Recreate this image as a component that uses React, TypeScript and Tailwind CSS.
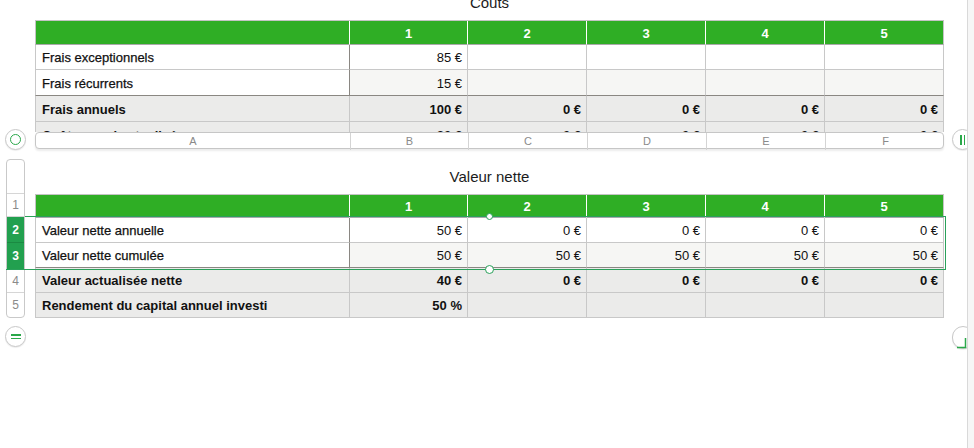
import React from 'react';

const COLS = 'grid grid-cols-[315px_118px_119px_119px_119px_119px]';

type Row = {
  label: string;
  values: string[];
  total?: boolean;
  alt?: boolean;
  lastPlain?: boolean;
  h: string;
};

const coutsRows: Row[] = [
  { label: 'Frais exceptionnels', values: ['85 €', '', '', '', ''], h: 'h-[25px]' },
  { label: 'Frais récurrents', values: ['15 €', '', '', '', ''], alt: true, lastPlain: true, h: 'h-[26px]' },
  { label: 'Frais annuels', values: ['100 €', '0 €', '0 €', '0 €', '0 €'], total: true, h: 'h-[26px]' },
  { label: 'Coût annuel actualisé', values: ['80 €', '0 €', '0 €', '0 €', '0 €'], total: true, h: 'h-[26px]' },
];

const valeurRows: Row[] = [
  { label: 'Valeur nette annuelle', values: ['50 €', '0 €', '0 €', '0 €', '0 €'], h: 'h-[25px]' },
  { label: 'Valeur nette cumulée', values: ['50 €', '50 €', '50 €', '50 €', '50 €'], alt: true, lastPlain: true, h: 'h-[25px]' },
  { label: 'Valeur actualisée nette', values: ['40 €', '0 €', '0 €', '0 €', '0 €'], total: true, h: 'h-[25px]' },
  { label: 'Rendement du capital annuel investi', values: ['50 %', '', '', '', ''], total: true, h: 'h-[25px]' },
];

function HeaderRow({ h }: { h: string }) {
  return (
    <div className={`${COLS} ${h} bg-[#2fae25] border-t border-[#c4c4c4]`}>
      <div className="border-l border-r border-white border-l-[#c4c4c4] border-b border-b-[#a9a9a9]" />
      {[1, 2, 3, 4, 5].map((n) => (
        <div
          key={n}
          className={`flex items-center justify-center pt-[2px] text-[13px] font-bold text-white border-b border-b-[#a9a9a9] ${n < 5 ? 'border-r border-white' : 'border-r border-[#c4c4c4]'}`}
        >
          {n}
        </div>
      ))}
    </div>
  );
}

function BodyRow({ row }: { row: Row }) {
  const bg = row.total ? 'bg-[#ebebea]' : row.alt ? 'bg-[#f6f6f4]' : 'bg-white';
  const bottom = row.lastPlain ? 'border-b-[#8a8782]' : 'border-b-[#c8c8c8]';
  const divider = row.total ? 'border-r-[#c8c8c8]' : 'border-r-[#8a8782]';
  return (
    <div className={`${COLS} ${row.h} ${bg} text-[13px] text-[#111]`}>
      <div
        className={`flex items-center pl-[6px] pt-[2px] border-l border-l-[#c8c8c8] border-r border-b ${divider} ${bottom} ${row.total ? 'font-bold' : '[-webkit-text-stroke:0.25px_#111]'} ${!row.total ? 'bg-white' : ''}`}
      >
        {row.label}
      </div>
      {row.values.map((v, i) => (
        <div
          key={i}
          className={`flex items-center justify-end pr-[5px] pt-[2px] border-r border-b border-r-[#c8c8c8] ${bottom} ${row.total ? 'font-bold' : ''}`}
        >
          {v}
        </div>
      ))}
    </div>
  );
}

function Circle({ children }: { children: React.ReactNode }) {
  return (
    <div className="relative w-[21px] h-[21px] shrink-0 rounded-full border border-[#c9c9c9] bg-white shadow-[0_1px_1px_rgba(0,0,0,0.08)] flex items-center justify-center">
      {children}
    </div>
  );
}

export default function App() {
  return (
    <div className="w-[974px] h-[448px] bg-white overflow-hidden flex font-['Liberation_Sans',Arial,sans-serif]">
      <div className="flex-1 min-w-0 overflow-hidden">
        {/* Coûts table, scrolled so it is cut at the top */}
        <div className="h-[132px] overflow-hidden pl-[35px]">
          <div className="w-[909px] -mt-[14px]">
            <div className="h-[34px] flex items-center justify-center text-[15px] text-[#1c1c1c]">Coûts</div>
            <HeaderRow h="h-[25px]" />
            {coutsRows.map((r) => (
              <BodyRow key={r.label} row={r} />
            ))}
          </div>
        </div>

        {/* column letters bar */}
        <div className="flex items-start -mt-[3px] h-[20px] w-[1000px]">
          <div className="w-[35px] shrink-0 pl-[5px]">
            <Circle>
              <div className="w-[11px] h-[11px] rounded-full border-[1.5px] border-[#2aa84a]" />
            </Circle>
          </div>
          <div className={`${COLS} w-[909px] shrink-0 h-[17px] mt-[3px] bg-white border border-[#c6c6c6] rounded-[4px] shadow-[0_2px_2px_rgba(0,0,0,0.08)] text-[11px] text-[#8a8a8a]`}>
            {['A', 'B', 'C', 'D', 'E', 'F'].map((c, i) => (
              <div key={c} className={`flex items-center justify-center ${i < 5 ? 'border-r border-[#d4d4d4]' : ''}`}>
                {c}
              </div>
            ))}
          </div>
          <div className="ml-[8px] shrink-0">
            <Circle>
              <div className="flex gap-[2px]">
                <div className="w-[1.5px] h-[10px] bg-[#2aa84a]" />
                <div className="w-[1.5px] h-[10px] bg-[#2aa84a]" />
              </div>
            </Circle>
          </div>
        </div>

        {/* Valeur nette */}
        <div className="flex mt-[10px]">
          <div className="w-[35px] shrink-0 pl-[6px]">
            <div className="w-[19px] border border-[#c9c9c9] rounded-[4px] overflow-hidden bg-white text-[12px] text-[#8a8a8a]">
              <div className="h-[34px] border-b border-[#d6d6d6]" />
              <div className="h-[23px] flex items-center justify-center border-b border-[#d6d6d6]">1</div>
              <div className="h-[26px] flex items-center justify-center bg-[#22a04f] text-white font-bold border-b border-[#1b8a42]">2</div>
              <div className="h-[26px] flex items-center justify-center bg-[#22a04f] text-white font-bold">3</div>
              <div className="h-[24px] flex items-center justify-center border-b border-[#d6d6d6]">4</div>
              <div className="h-[24px] flex items-center justify-center">5</div>
            </div>
          </div>
          <div className="w-[909px] shrink-0 relative">
            <div className="h-[35px] flex items-center justify-center pt-[1px] text-[15px] text-[#1c1c1c]">Valeur nette</div>
            <HeaderRow h="h-[24px]" />
            {valeurRows.map((r) => (
              <BodyRow key={r.label} row={r} />
            ))}
            {/* selection outline over rows 2-3 */}
            <div className="absolute left-[-10px] top-[57px] w-[921px] h-[54px] border border-l-0 border-[#2aa15a] pointer-events-none" />
            <div className="absolute left-[-29px] top-[110px] w-[20px] h-px bg-[#2aa15a]" />
            <div className="absolute left-[451px] top-[54px] w-[7px] h-[7px] rounded-full bg-white border border-[#2aa15a]" />
            <div className="absolute left-[450px] top-[106px] w-[9px] h-[9px] rounded-full bg-white border border-[#2aa15a]" />
          </div>
        </div>

        {/* bottom controls */}
        <div className="flex items-start mt-[8px] pl-[5px] w-[1000px]">
          <Circle>
            <div className="flex flex-col gap-[2px]">
              <div className="w-[10px] h-[1.5px] bg-[#2aa84a]" />
              <div className="w-[10px] h-[1.5px] bg-[#2aa84a]" />
            </div>
          </Circle>
          <div className="ml-[926px] shrink-0">
            <div className="relative w-[22px] h-[23px] rounded-full border border-[#c9c9c9] bg-white shadow-[0_1px_1px_rgba(0,0,0,0.08)]">
              <svg className="absolute left-0 top-0 overflow-visible" width="22" height="23" viewBox="0 0 22 23">
                <path d="M4 20.5 H12.5 V11" fill="none" stroke="#2aa84a" strokeWidth="1.5" />
              </svg>
            </div>
          </div>
        </div>
      </div>
      <div className="w-[7px] shrink-0 border-l border-[#d9d9d9] bg-[#f6f6f6]" />
    </div>
  );
}
